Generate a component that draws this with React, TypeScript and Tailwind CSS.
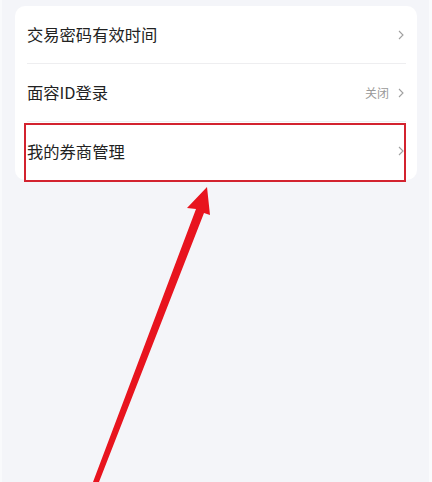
import { ReactNode } from 'react';

function Chevron() {
  return (
    <svg width="6" height="10" viewBox="0 0 6 10" className="shrink-0">
      <path d="M1 1l4 4-4 4" fill="none" stroke="#a0a0a0" strokeWidth="1.1" />
    </svg>
  );
}

function Row({ label, extra, last, children }: { label: string; extra?: string; last?: boolean; children?: ReactNode }) {
  return (
    <div className={`relative h-[58px] flex items-center justify-between ${last ? '' : 'border-b border-[#eeeef0]'}`}>
      <span className="text-[16.3px] text-[#222]">{label}</span>
      <div className="flex items-center gap-[9px] pr-[2px]">
        {extra && <span className="text-[12px] text-[#9a9a9a]">{extra}</span>}
        <Chevron />
      </div>
      {children}
    </div>
  );
}

export default function App() {
  return (
    <div
      className="relative w-[432px] h-[482px] overflow-hidden bg-[#f4f5f9] flex"
      style={{ fontFamily: '"Noto Sans CJK SC", "Noto Sans", sans-serif' }}
    >
      <div className="w-[2px] bg-[#f9fafc]" />
      <div className="flex-1 pl-[13px] pr-[12px] pt-[6px]">
        <div className="bg-white rounded-[10px] pl-[12px] pr-[11px]">
          <Row label="交易密码有效时间" />
          <Row label="面容ID登录" extra="关闭" />
          <Row label="我的券商管理" last>
            <div className="absolute left-[-3px] right-[0px] top-[1px] bottom-[-2px] border-2 border-[#d3232f]" />
          </Row>
        </div>
      </div>
      <div className="w-[3px] bg-[#fafbfd]" />

      {/* annotation arrow */}
      <svg className="absolute inset-0" width="432" height="482" viewBox="0 0 432 482">
        <polygon
          points="207,187 187,208 196,209 93,482 99,482 204,213 210,215"
          fill="#e8141e"
        />
      </svg>
    </div>
  );
}
